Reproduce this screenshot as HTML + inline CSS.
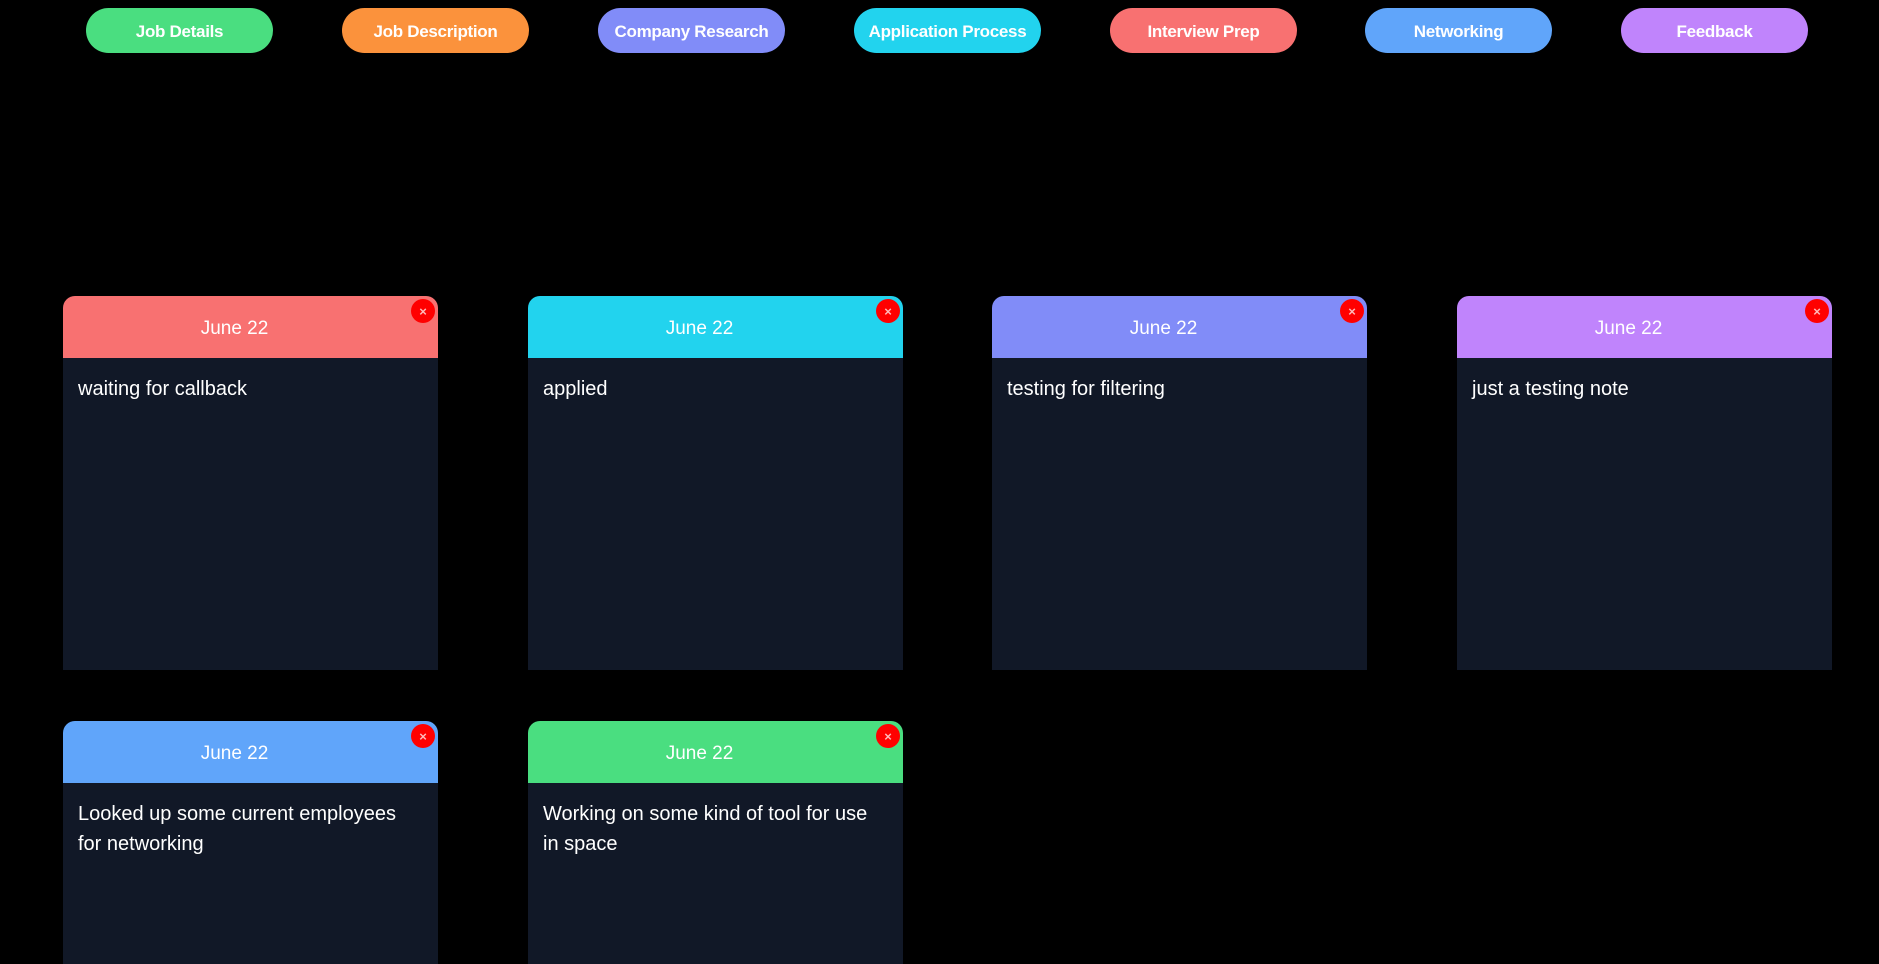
<!DOCTYPE html>
<html><head><meta charset="utf-8"><style>
*{margin:0;padding:0;box-sizing:border-box}
html,body{width:1879px;height:964px;background:#000;overflow:hidden;font-family:"Liberation Sans",sans-serif}
#w{position:relative;width:1879px;height:964px;overflow:hidden;background:#000}
.btn{position:absolute;top:8px;height:45px;width:187px;border-radius:23px;color:#fff;font-weight:bold;font-size:17px;display:flex;align-items:center;justify-content:center;letter-spacing:-0.3px;padding-top:2px}
.card{position:absolute;width:375px;height:374px;background:#111827;border-radius:12px 12px 0 0}
.hd{height:62px;border-radius:12px 12px 0 0;color:#fff;font-size:19px;display:flex;align-items:center;justify-content:center;padding-right:32px;padding-top:3px}
.x{position:absolute;right:3px;top:3px;width:24px;height:24px;border-radius:50%;background:#f00;color:#fbb;font-size:13px;font-weight:bold;display:flex;align-items:center;justify-content:center}
.bd{color:#fff;font-size:20px;line-height:30px;padding:16px 15px}
</style></head><body><div id="w">
<div class="btn" style="left:86px;background:#4ade80">Job Details</div>
<div class="btn" style="left:342px;background:#fb923c">Job Description</div>
<div class="btn" style="left:598px;background:#818cf8">Company Research</div>
<div class="btn" style="left:854px;background:#22d3ee">Application Process</div>
<div class="btn" style="left:1110px;background:#f87171">Interview Prep</div>
<div class="btn" style="left:1365px;background:#60a5fa">Networking</div>
<div class="btn" style="left:1621px;background:#c084fc">Feedback</div>

<div class="card" style="left:63px;top:296px"><div class="hd" style="background:#f87171">June 22</div><div class="x">×</div><div class="bd">waiting for callback</div></div>
<div class="card" style="left:528px;top:296px"><div class="hd" style="background:#22d3ee">June 22</div><div class="x">×</div><div class="bd">applied</div></div>
<div class="card" style="left:992px;top:296px"><div class="hd" style="background:#818cf8">June 22</div><div class="x">×</div><div class="bd">testing for filtering</div></div>
<div class="card" style="left:1457px;top:296px"><div class="hd" style="background:#c084fc">June 22</div><div class="x">×</div><div class="bd">just a testing note</div></div>
<div class="card" style="left:63px;top:721px;height:243px"><div class="hd" style="background:#60a5fa">June 22</div><div class="x">×</div><div class="bd">Looked up some current employees for networking</div></div>
<div class="card" style="left:528px;top:721px;height:243px"><div class="hd" style="background:#4ade80">June 22</div><div class="x">×</div><div class="bd">Working on some kind of tool for use in space</div></div>
</div></body></html>
